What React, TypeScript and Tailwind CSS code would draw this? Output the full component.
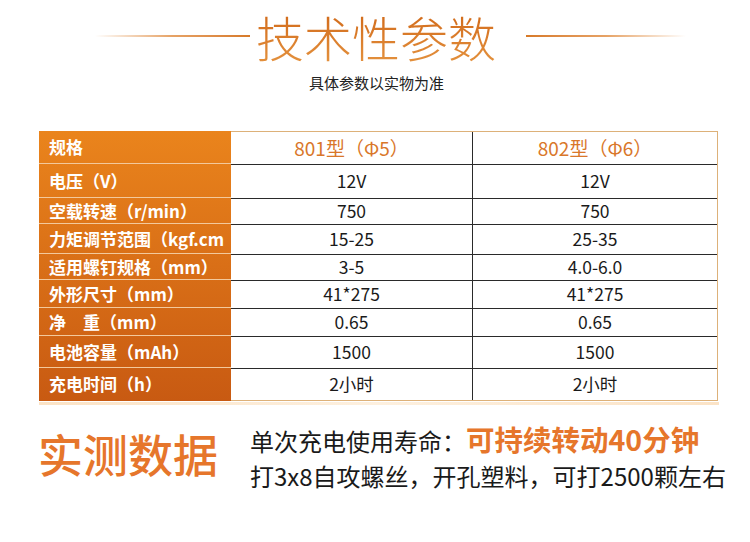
import React from "react";

const rows = [
  { label: "规格", a: "801型（Φ5）", b: "802型（Φ6）", h: "h-[32px]", head: true },
  { label: "电压（V）", a: "12V", b: "12V", h: "h-[34px]" },
  { label: "空载转速（r/min）", a: "750", b: "750", h: "h-[26px]" },
  { label: "力矩调节范围（kgf.cm", a: "15-25", b: "25-35", h: "h-[30px]" },
  { label: "适用螺钉规格（mm）", a: "3-5", b: "4.0-6.0", h: "h-[26px]" },
  { label: "外形尺寸（mm）", a: "41*275", b: "41*275", h: "h-[28px]" },
  { label: "净　重（mm）", a: "0.65", b: "0.65", h: "h-[28px]" },
  { label: "电池容量（mAh）", a: "1500", b: "1500", h: "h-[32px]" },
  { label: "充电时间（h）", a: "2小时", b: "2小时", h: "h-[32px]" },
];

export default function App() {
  return (
    <div className="w-[750px] h-[542px] bg-white overflow-hidden font-['Noto_Sans_CJK_SC','Noto_Sans',sans-serif]">
      {/* --- Title --- */}
      <div className="flex items-center pt-[10px] h-[62px] pl-[95px]">
        <div className="w-[155px] h-[2px] bg-gradient-to-r from-transparent via-[#e6a265] to-[#d77a28]" />
        <h1 className="ml-[6px] text-[48px] leading-[52px] font-light bg-gradient-to-b from-[#d06816] to-[#e3903c] bg-clip-text text-transparent">
          技术性参数
        </h1>
        <div className="ml-[30px] w-[160px] h-[2px] bg-gradient-to-r from-[#d77a28] via-[#e6a265] to-transparent" />
      </div>
      <p className="text-center text-[15px] leading-[22px] text-[#222] mt-[10px] ml-[3px]">
        具体参数以实物为准
      </p>

      {/* --- Spec table --- */}
      <div className="mt-[37px] ml-[39px] w-[679px] flex">
        <div className="w-[192px] bg-gradient-to-b from-[#ea841c] to-[#c85a12]">
          {rows.map((r, i) => (
            <div
              key={r.label}
              className={`${r.h} flex items-center pl-[10px] whitespace-nowrap text-white font-bold text-[17px] ${i > 0 ? "border-t border-[#f3c99c]" : ""}`}
            >
              {r.label}
            </div>
          ))}
        </div>
        <div className="flex-1 border border-[#ddb179] border-l-0">
          {rows.map((r, i) => (
            <div
              key={r.label}
              className={`flex ${r.h} ${i > 0 ? "border-t border-[#2a2a2a]" : ""} ${
                r.head ? "text-[#d9772a] text-[19px]" : "text-[#1a1a1a] text-[17.5px]"
              }`}
            >
              <div className="w-[242px] flex items-center justify-center border-r border-[#2a2a2a]">
                {r.a}
              </div>
              <div className="flex-1 flex items-center justify-center">{r.b}</div>
            </div>
          ))}
        </div>
      </div>
      <div className="ml-[39px] mt-[1px] w-[680px] h-[3px] bg-gradient-to-r from-[#fbe3c6] via-[#fdf0df] to-[#fbe3c6]" />

      {/* --- Measured data --- */}
      <div className="flex items-center mt-[9px] pl-[38px]">
        <div className="text-[45px] leading-[56px] font-medium text-[#e6762b]">
          实测数据
        </div>
        <div className="ml-[32px] flex flex-col pt-[8px]">
          <div className="flex items-baseline text-[#1a1a1a] text-[24px] leading-[34px]">
            <span>单次充电使用寿命：</span>
            <span className="text-[#e6762b] font-bold text-[28.5px]">可持续转动40分钟</span>
          </div>
          <div className="text-[#1a1a1a] text-[24px] leading-[34px] mt-[1px]">
            打3x8自攻螺丝，开孔塑料，可打2500颗左右
          </div>
        </div>
      </div>
    </div>
  );
}
